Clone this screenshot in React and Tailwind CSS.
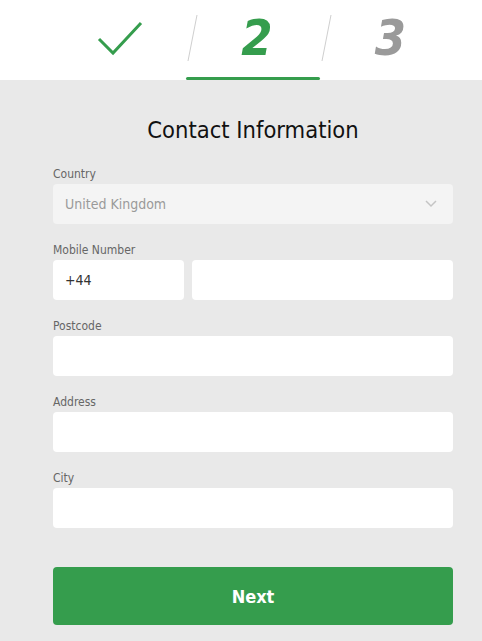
import React from "react";

const fieldClass =
  "w-full h-10 rounded bg-white px-3 text-[14px] text-[#333] outline-none";

function Field({ label, children }) {
  return (
    <div className="mt-[18px] first:mt-0">
      <label className="block text-[12px] leading-4 text-[#666] mb-[2px]">
        {label}
      </label>
      {children}
    </div>
  );
}

function Slash() {
  return (
    <svg
      className="absolute left-0 top-[14px]"
      width="14"
      height="48"
      viewBox="0 0 14 48"
    >
      <line x1="11" y1="1" x2="2" y2="47" stroke="#cfcfcf" strokeWidth="1" />
    </svg>
  );
}

function MainComponent() {
  return (
    <div
      className="min-h-screen bg-[#e9e9e9]"
      style={{ fontFamily: '"DejaVu Sans Condensed", "Open Sans", sans-serif' }}
    >
      <div className="bg-white h-20">
        <div className="ml-[53px] w-[400px] grid grid-cols-3 h-full">
          <div className="flex items-center justify-center">
            <svg width="46" height="36" viewBox="0 0 46 36" className="-mt-1">
              <polyline
                points="2,19 16,33 44,3"
                fill="none"
                stroke="#359d4d"
                strokeWidth="3"
              />
            </svg>
          </div>
          <div className="relative flex items-center justify-center">
            <Slash />
            <span className="text-[50px] font-bold italic leading-none text-[#359d4d] -mt-1 ml-2">
              2
            </span>
            <div className="absolute left-0 right-0 bottom-0 h-[3px] rounded-full bg-[#359d4d]" />
          </div>
          <div className="relative flex items-center justify-center">
            <Slash />
            <span className="text-[50px] font-bold italic leading-none text-[#9a9a9a] -mt-1 ml-2">
              3
            </span>
          </div>
        </div>
      </div>

      <div className="ml-[53px] w-[400px] pt-[36px] pb-4">
        <h1 className="text-center text-[23.5px] leading-7 text-[#111] mb-[22px]">
          Contact Information
        </h1>

        <form>
          <Field label="Country">
            <div className="w-full h-10 rounded bg-[#f4f4f4] px-3 flex items-center justify-between">
              <span className="text-[14px] text-[#9a9a9a]">United Kingdom</span>
              <svg width="12" height="8" viewBox="0 0 12 8" className="mr-1">
                <polyline
                  points="1,1 6,6 11,1"
                  fill="none"
                  stroke="#c4c4c4"
                  strokeWidth="1.5"
                />
              </svg>
            </div>
          </Field>

          <Field label="Mobile Number">
            <div className="flex gap-2">
              <input
                className="w-[131px] h-10 rounded bg-white px-3 text-[14px] text-[#333] outline-none"
                defaultValue="+44"
              />
              <input className={fieldClass + " flex-1"} />
            </div>
          </Field>

          <Field label="Postcode">
            <input className={fieldClass} />
          </Field>

          <Field label="Address">
            <input className={fieldClass} />
          </Field>

          <Field label="City">
            <input className={fieldClass} />
          </Field>

          <button
            type="button"
            className="mt-[39px] w-full h-[58px] rounded bg-[#359d4d] text-white text-[18px] font-bold"
          >
            Next
          </button>
        </form>
      </div>
    </div>
  );
}

export default MainComponent;
